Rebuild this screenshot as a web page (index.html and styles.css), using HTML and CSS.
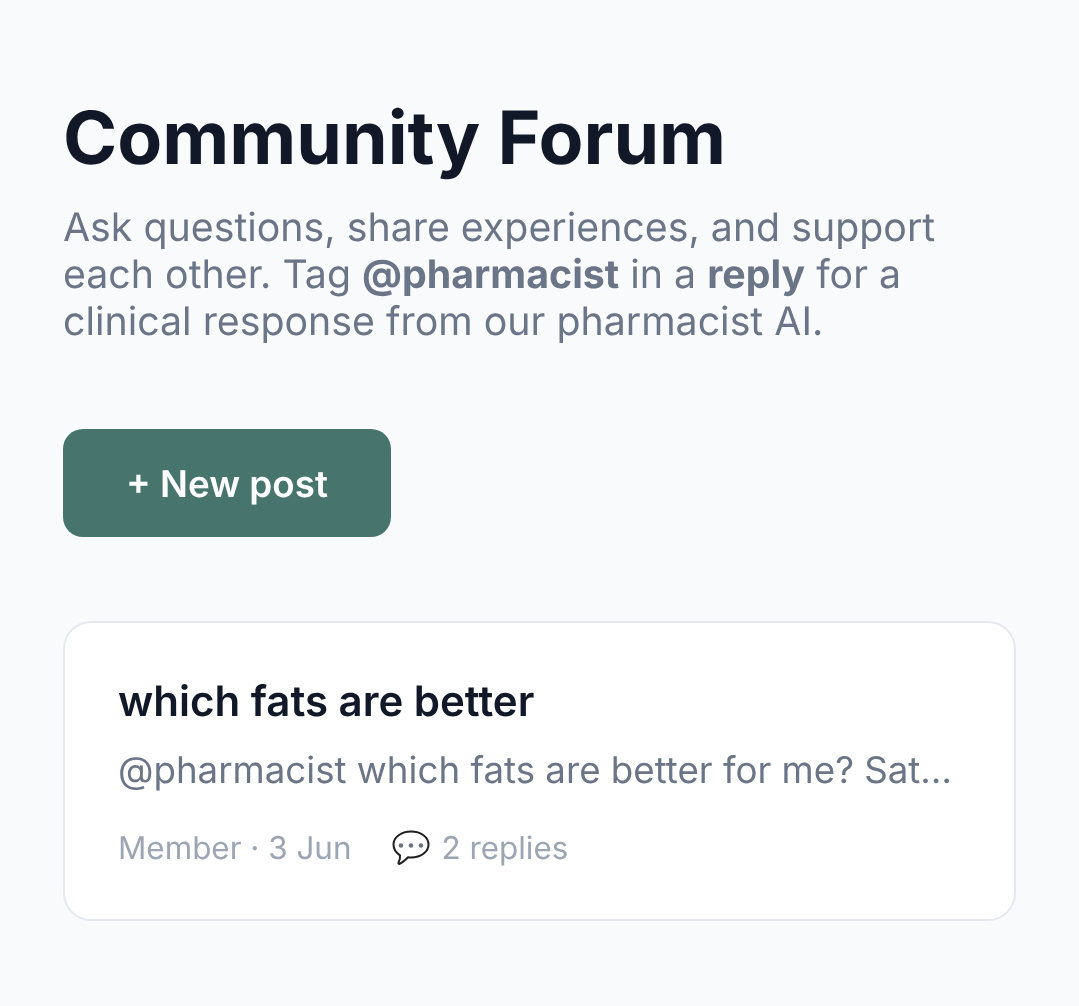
FILE: index.html
```html
<!DOCTYPE html>
<html>
<head>
    <title>Community Forum</title>
    <link rel="stylesheet" href="styles.css">
</head>
<body>
<div class="page">
    <h1 class="title">Community Forum</h1>
    <p class="intro">Ask questions, share experiences, and support each other. Tag <b>@pharmacist</b> in a <b>reply</b> for a clinical response from our pharmacist AI.</p>
    <button class="new-post">+ New post</button>
    <div class="post">
        <div class="post-title">which fats are better</div>
        <div class="post-body">@pharmacist which fats are better for me? Saturated fats or unsaturated</div>
        <div class="post-meta">
            <span>Member · 3 Jun</span>
            <span class="replies">
                <svg class="bubble" viewBox="0 0 38 36" width="38" height="36">
                    <path d="M19 1.500C9.500 1.500 1.500 7 1.500 14.500c0 4.800 3 8.600 6.500 10.800.3 2.500-.3 5-1.500 7.500-.3.8.4 1.300 1.100 1 3.500-1.500 6-4 8.400-6.500 1 .1 2 .2 3 .2 10 0 17.500-5.500 17.500-13S29 1.500 19 1.500z" fill="#fff" stroke="#1f1f1f" stroke-width="2" stroke-linejoin="round"/>
                    <circle cx="9" cy="15.500" r="2.300" fill="#6b7280"/>
                    <circle cx="19" cy="15.500" r="2.300" fill="#6b7280"/>
                    <circle cx="29" cy="15.500" r="2.300" fill="#6b7280"/>
                </svg>
                2 replies
            </span>
        </div>
    </div>
</div>
</body>
</html>
```

FILE: styles.css
```css
* {
    box-sizing: border-box;
}

body {
    margin: 0;
    background-color: #f9fafc;
    font-family: Inter, "Liberation Sans", sans-serif;
    text-rendering: geometricPrecision;
}

/* own layer, so text gets greyscale antialiasing like the reference */
.page {
    padding: 96px 63px 84px;
    will-change: transform;
}

.title {
    margin: 0 0 24px;
    font-size: 73.400px;
    line-height: 84px;
    font-weight: 700;
    color: #111827;
}

.intro {
    margin: 0 0 84px;
    font-size: 39.300px;
    line-height: 47px;
    color: #6b7588;
}

.new-post {
    display: block;
    width: 328px;
    height: 108px;
    margin-bottom: 84px;
    padding: 1px 0 0;
    border: none;
    border-radius: 20px;
    background-color: #47756e;
    color: #fff;
    font-family: inherit;
    font-size: 36.800px;
    font-weight: 600;
    text-rendering: geometricPrecision;
}

.post {
    height: 300px;
    padding: 53px 53px;
    border: 2px solid #e5e8ef;
    border-radius: 28px;
    background-color: #fff;
}

.post-title {
    font-size: 42px;
    line-height: 52px;
    font-weight: 600;
    color: #111827;
}

.post-body {
    margin-top: 16px;
    font-size: 36.700px;
    line-height: 52px;
    color: #6b7588;
    white-space: nowrap;
    overflow: hidden;
    text-overflow: ellipsis;
}

.post-meta {
    display: flex;
    align-items: center;
    gap: 41px;
    margin-top: 30px;
    font-size: 31.400px;
    line-height: 44px;
    color: #9ca5b4;
}

.replies {
    display: flex;
    align-items: center;
    gap: 11px;
}
```
